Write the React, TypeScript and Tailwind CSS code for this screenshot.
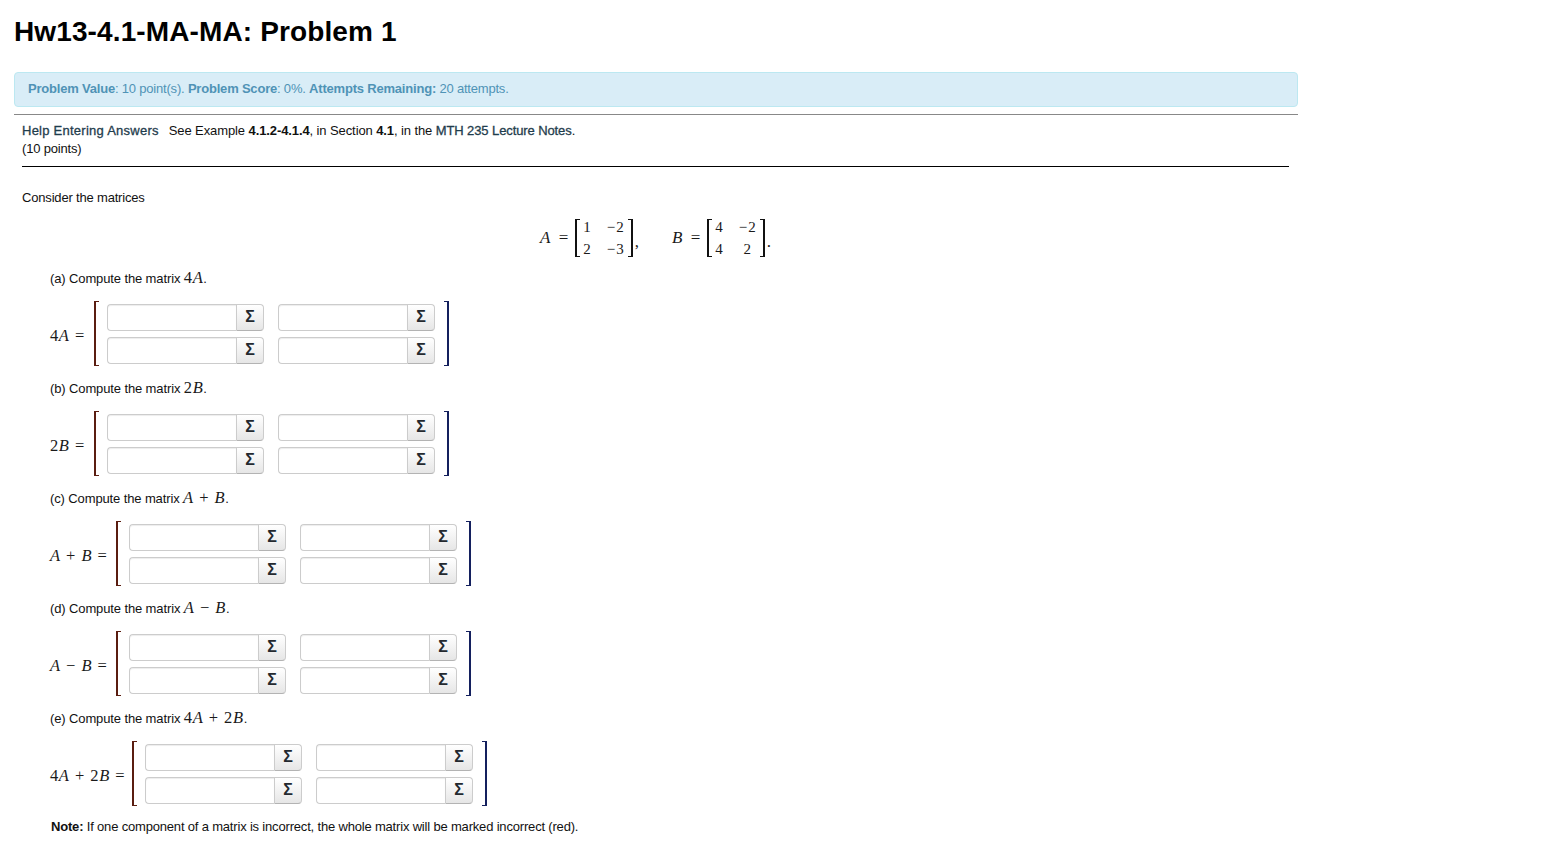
import React from "react";

const sans = "font-['Liberation_Sans',Arial,sans-serif]";
const math = "font-['Liberation_Serif','Times_New_Roman',serif]";

function M({ children, className = "" }: { children: React.ReactNode; className?: string }) {
  return (
    <span className={`${math} text-[16.5px] tracking-[0.6px] [word-spacing:0.7px] text-[#1a1a1a] ${className}`}>
      {children}
    </span>
  );
}

function V({ children }: { children: React.ReactNode }) {
  return <i className="italic">{children}</i>;
}

function Cell() {
  return (
    <div className="flex h-[27px] w-[157px]">
      <div className="w-[129px] rounded-l-[4px] border border-r-0 border-[#cccccc] bg-white shadow-[inset_0_1px_1px_rgba(0,0,0,0.075)]" />
      <div className="flex w-[28px] items-center justify-center rounded-r-[4px] border border-[#cccccc] border-b-[#b3b3b3] bg-gradient-to-b from-white to-[#e6e6e6] text-[16px] font-bold leading-none tracking-normal text-[#24292f]">
        Σ
      </div>
    </div>
  );
}

function Bracket({ right = false }: { right?: boolean }) {
  return (
    <div
      className={`h-[65px] w-[5px] border-y ${
        right ? "border-r-2 border-[#14205e]" : "border-l-2 border-[#5a1d10]"
      }`}
    />
  );
}

function Part({
  prompt,
  label,
  labelWidth,
}: {
  prompt: React.ReactNode;
  label: React.ReactNode;
  labelWidth: string;
}) {
  return (
    <section className="ml-[28px] pb-[12px]">
      <p className="h-[20px] leading-[20px] tracking-[-0.12px]">{prompt}</p>
      <div className="mt-[13px] flex items-center">
        <div className={`${labelWidth} shrink-0 pt-[6px]`}>{label}</div>
        <Bracket />
        <div className="ml-[8px] grid grid-cols-[157px_157px] gap-x-[14px] gap-y-[6px]">
          <Cell />
          <Cell />
          <Cell />
          <Cell />
        </div>
        <div className="ml-[9px]">
          <Bracket right />
        </div>
      </div>
    </section>
  );
}

function Given({ name, rows, end }: { name: string; rows: string[][]; end: string }) {
  return (
    <span className={`${math} flex items-center text-[17px] tracking-normal text-[#1a1a1a]`}>
      <span className="mr-[7px] [word-spacing:4px]">
        <V>{name}</V> =
      </span>
      <span className="h-[38px] w-[5px] border-y border-l-2 border-[#111]" />
      <span className="grid grid-cols-[auto_auto] gap-x-[15px] px-[3px] text-[15px] font-medium leading-[22px]">
        {rows.flat().map((c, i) => (
          <span key={i} className="text-center tracking-[1px]">
            {c}
          </span>
        ))}
      </span>
      <span className="h-[38px] w-[5px] border-y border-r-2 border-[#111]" />
      <span className="self-end pb-[6px] pl-[2px]">{end}</span>
    </span>
  );
}

export default function App() {
  return (
    <div className={`${sans} ml-[14px] w-[1284px] pb-[12px] text-[13px] tracking-[-0.18px] text-[#111]`}>
      <h1 className="pt-[15px] text-[28px] font-bold leading-[34px] tracking-[0.12px] text-black">
        Hw13-4.1-MA-MA: Problem 1
      </h1>
      <div className="mt-[23px] flex h-[35px] items-center rounded-[4px] border border-[#bce8f1] bg-[#d9edf7] px-[13px] pb-[1px] tracking-[-0.2px] text-[#4f93b6]">
        <p>
          <b>Problem Value</b>: 10 point(s). <b>Problem Score</b>: 0%. <b>Attempts Remaining:</b> 20 attempts.
        </p>
      </div>
      <div className="mt-[7px] border-t border-[#888888] pl-[8px] pr-[9px]">
        <div className="border-b border-black pt-[7px] pb-[8px] leading-[18px]">
          <p className="tracking-[-0.1px]">
            <span className="tracking-[0.25px] text-[#1f3d4d] [-webkit-text-stroke:0.3px]">Help Entering Answers</span>
            <span className="ml-[10px]">See Example </span>
            <b>4.1.2-4.1.4</b>, in Section <b>4.1</b>, in the{" "}
            <span className="text-[#1f3d4d] [-webkit-text-stroke:0.3px]">MTH 235 Lecture Notes</span>.
          </p>
          <p>(10 points)</p>
        </div>
        <p className="mt-[21px] leading-[20px]">Consider the matrices</p>
        <div className="mt-[8px] flex h-[44px] items-center justify-center gap-[33px]">
          <Given name="A" rows={[["1", "−2"], ["2", "−3"]]} end="," />
          <Given name="B" rows={[["4", "−2"], ["4", "2"]]} end="." />
        </div>
        <div className="mt-[8px]">
          <Part
            prompt={<>(a) Compute the matrix <M>4<V>A</V></M>.</>}
            label={<M>4<V>A</V> =</M>}
            labelWidth="w-[44px]"
          />
          <Part
            prompt={<>(b) Compute the matrix <M>2<V>B</V></M>.</>}
            label={<M>2<V>B</V> =</M>}
            labelWidth="w-[44px]"
          />
          <Part
            prompt={<>(c) Compute the matrix <M><V>A</V> + <V>B</V></M>.</>}
            label={<M><V>A</V> + <V>B</V> =</M>}
            labelWidth="w-[66px]"
          />
          <Part
            prompt={<>(d) Compute the matrix <M><V>A</V> − <V>B</V></M>.</>}
            label={<M><V>A</V> − <V>B</V> =</M>}
            labelWidth="w-[66px]"
          />
          <Part
            prompt={<>(e) Compute the matrix <M>4<V>A</V> + 2<V>B</V></M>.</>}
            label={<M>4<V>A</V> + 2<V>B</V> =</M>}
            labelWidth="w-[82px]"
          />
        </div>
        <p className="-mt-[1px] ml-[29px] leading-[20px]">
          <b>Note:</b> If one component of a matrix is incorrect, the whole matrix will be marked incorrect (red).
        </p>
      </div>
    </div>
  );
}
